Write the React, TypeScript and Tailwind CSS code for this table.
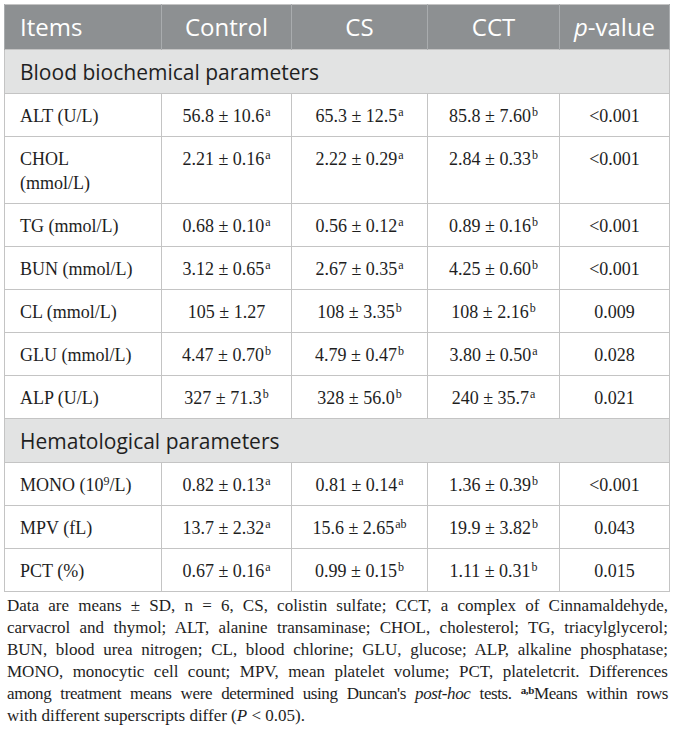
import React from "react";

type Cell = [string, string?];
type Row = { item: React.ReactNode; vals: Cell[]; p: string };

const biochem: Row[] = [
  { item: "ALT (U/L)", vals: [["56.8 ± 10.6", "a"], ["65.3 ± 12.5", "a"], ["85.8 ± 7.60", "b"]], p: "<0.001" },
  { item: "CHOL (mmol/L)", vals: [["2.21 ± 0.16", "a"], ["2.22 ± 0.29", "a"], ["2.84 ± 0.33", "b"]], p: "<0.001" },
  { item: "TG (mmol/L)", vals: [["0.68 ± 0.10", "a"], ["0.56 ± 0.12", "a"], ["0.89 ± 0.16", "b"]], p: "<0.001" },
  { item: "BUN (mmol/L)", vals: [["3.12 ± 0.65", "a"], ["2.67 ± 0.35", "a"], ["4.25 ± 0.60", "b"]], p: "<0.001" },
  { item: "CL (mmol/L)", vals: [["105 ± 1.27"], ["108 ± 3.35", "b"], ["108 ± 2.16", "b"]], p: "0.009" },
  { item: "GLU (mmol/L)", vals: [["4.47 ± 0.70", "b"], ["4.79 ± 0.47", "b"], ["3.80 ± 0.50", "a"]], p: "0.028" },
  { item: "ALP (U/L)", vals: [["327 ± 71.3", "b"], ["328 ± 56.0", "b"], ["240 ± 35.7", "a"]], p: "0.021" },
];

const hema: Row[] = [
  {
    item: (
      <>
        MONO (10<sup className="text-[12px]">9</sup>/L)
      </>
    ),
    vals: [["0.82 ± 0.13", "a"], ["0.81 ± 0.14", "a"], ["1.36 ± 0.39", "b"]],
    p: "<0.001",
  },
  { item: "MPV (fL)", vals: [["13.7 ± 2.32", "a"], ["15.6 ± 2.65", "ab"], ["19.9 ± 3.82", "b"]], p: "0.043" },
  { item: "PCT (%)", vals: [["0.67 ± 0.16", "a"], ["0.99 ± 0.15", "b"], ["1.11 ± 0.31", "b"]], p: "0.015" },
];

const td = "border border-[#c4c4c4] pt-[10px] pb-[8px] leading-[24px] align-top";

function DataRow({ row }: { row: Row }) {
  return (
    <tr>
      <td className={`${td} pl-[15px] pr-[20px] text-left`}>{row.item}</td>
      {row.vals.map(([v, s], i) => (
        <td key={i} className={`${td} text-center`}>
          {v}
          {s && <sup className="text-[12px] ml-[1px]">{s}</sup>}
        </td>
      ))}
      <td className={`${td} text-center`}>{row.p}</td>
    </tr>
  );
}

function SectionRow({ label }: { label: string }) {
  return (
    <tr>
      <td
        colSpan={5}
        className="border border-[#c4c4c4] bg-[#e2e3e3] pl-[15px] pt-[8px] pb-[7px] leading-[28px] text-[21px] text-[#1f1f1f] font-['Open_Sans',sans-serif]"
      >
        {label}
      </td>
    </tr>
  );
}

// each footnote line justified on its own so the breaks follow the printed table
const line = "whitespace-nowrap text-justify [text-align-last:justify] h-[22px]";

export default function App() {
  const th = "border-x border-[#a9acae] py-[6px] leading-[32px] font-normal";
  return (
    <div className="bg-white w-[673px] min-h-[746px] px-[4px] pt-[4px] text-[#1e1e1e]">
      <table className="w-[665px] table-fixed border-collapse border border-[#c4c4c4] text-[18px] font-['Liberation_Serif',serif]">
        <colgroup>
          <col className="w-[157px]" />
          <col className="w-[130px]" />
          <col className="w-[136px]" />
          <col className="w-[132px]" />
          <col className="w-[110px]" />
        </colgroup>
        <thead>
          <tr className="bg-[#8d9092] text-white text-[24px] font-['Open_Sans',sans-serif]">
            <th className={`${th} text-left pl-[15px]`}>Items</th>
            <th className={`${th} text-center`}>Control</th>
            <th className={`${th} text-center`}>CS</th>
            <th className={`${th} text-center`}>CCT</th>
            <th className={`${th} text-center`}>
              <i>p</i>-value
            </th>
          </tr>
        </thead>
        <tbody>
          <SectionRow label="Blood biochemical parameters" />
          {biochem.map((r, i) => (
            <DataRow key={i} row={r} />
          ))}
          <SectionRow label="Hematological parameters" />
          {hema.map((r, i) => (
            <DataRow key={i} row={r} />
          ))}
        </tbody>
      </table>

      <div className="mt-[3px] pl-[3px] pr-[1px] text-[17px] leading-[22px] font-['Liberation_Serif',serif] text-[#1e1e1e]">
        <div className={line}>Data are means ± SD, n = 6, CS, colistin sulfate; CCT, a complex of Cinnamaldehyde,</div>
        <div className={line}>carvacrol and thymol; ALT, alanine transaminase; CHOL, cholesterol; TG, triacylglycerol;</div>
        <div className={line}>BUN, blood urea nitrogen; CL, blood chlorine; GLU, glucose; ALP, alkaline phosphatase;</div>
        <div className={line}>MONO, monocytic cell count; MPV, mean platelet volume; PCT, plateletcrit. Differences</div>
        <div className={`${line} tracking-[-0.4px]`}>
          among treatment means were determined using Duncan's <i>post-hoc</i> tests.{" "}
          <sup className="text-[11px] font-bold leading-none">a,b</sup>Means within rows
        </div>
        <div className="h-[22px] whitespace-nowrap">
          with different superscripts differ (<i>P</i> &lt; 0.05).
        </div>
      </div>
    </div>
  );
}
